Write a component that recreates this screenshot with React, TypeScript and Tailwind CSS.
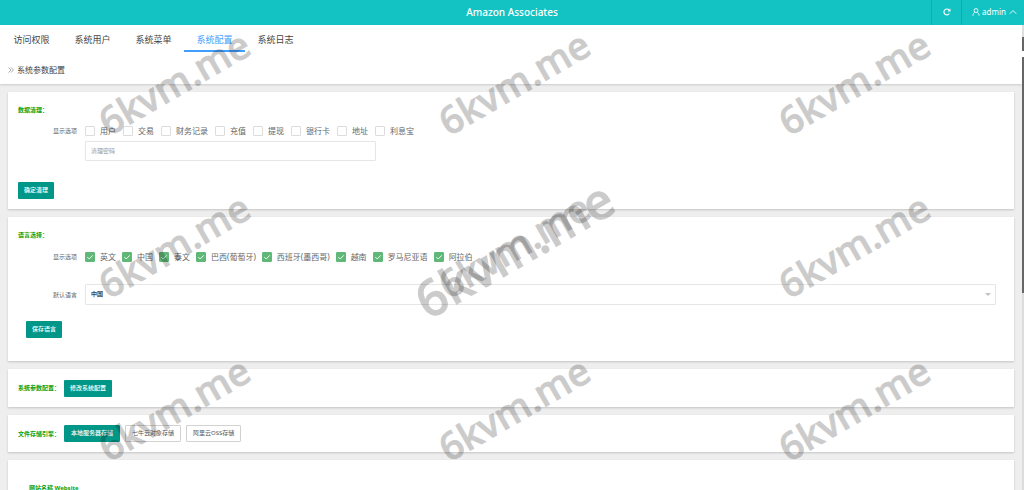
import { useState } from 'react';

const tabs = ['访问权限', '系统用户', '系统菜单', '系统配置', '系统日志'];
const cleanOptions = ['用户', '交易', '财务记录', '充值', '提现', '银行卡', '地址', '利息宝'];
const languages = ['英文', '中国', '泰文', '巴西(葡萄牙)', '西班牙(墨西哥)', '越南', '罗马尼亚语', '阿拉伯'];
const engines = ['本地服务器存储', '七牛云对象存储', '阿里云OSS存储'];

function CheckItem({ label, checked = false }: { label: string; checked?: boolean }) {
    return (
        <label className="flex items-center gap-[5px] text-[8px] leading-[10px] text-[#666] whitespace-nowrap">
            <span className="relative flex">
                <input
                    type="checkbox"
                    defaultChecked={checked}
                    className="peer appearance-none size-[10px] rounded-[1px] border border-[#dcdcdc] bg-white checked:border-[#5fb878] checked:bg-[#5fb878]"
                />
                <svg viewBox="0 0 10 10" className="absolute inset-0 size-[10px] hidden peer-checked:block pointer-events-none">
                    <path d="M2.3 5.1 4.2 7 7.8 3.3" fill="none" stroke="#fff" strokeWidth="0.9" />
                </svg>
            </span>
            {label}
        </label>
    );
}

function Card({ className, children }: { className: string; children?: React.ReactNode }) {
    return <section className={`bg-white px-[10px] shadow-[0_1px_2px_rgba(0,0,0,0.18)] ${className}`}>{children}</section>;
}

function Heading({ children }: { children: React.ReactNode }) {
    return <h2 className="text-[6px] leading-[10px] font-bold text-[#0a9f0a] whitespace-nowrap">{children}</h2>;
}

function PrimaryButton({ children }: { children: React.ReactNode }) {
    return (
        <button className="h-[17px] px-[6px] rounded-[1px] bg-[#009688] text-[6px] font-medium text-white whitespace-nowrap">
            {children}
        </button>
    );
}

function Watermark() {
    return (
        <div className="absolute inset-0 pointer-events-none select-none text-black font-medium" aria-hidden="true">
            <div className="grid grid-cols-3 grid-rows-3 size-full pl-1">
                {Array.from({ length: 9 }, (_, i) => (
                    <span key={i} className="flex items-center justify-center">
                        <span className="-rotate-30 text-[38px] leading-none opacity-20 [-webkit-text-stroke:1px_black]">6kvm.me</span>
                    </span>
                ))}
            </div>
            <div className="absolute inset-0 flex items-center justify-center pl-1 pt-2">
                <span className="-rotate-30 text-[50px] leading-none opacity-20 [-webkit-text-stroke:1px_black]">6kvm.me</span>
            </div>
        </div>
    );
}

export default function App() {
    const [activeTab, setActiveTab] = useState('系统配置');
    const [engine, setEngine] = useState('本地服务器存储');

    return (
        <div className="relative h-screen overflow-hidden flex flex-col bg-[#eee] font-['Noto_Sans','Noto_Sans_CJK_SC',sans-serif] text-[#444]">
            <header className="grid grid-cols-[1fr_auto_1fr] h-[25px] shrink-0 bg-[#13c2c2] text-white">
                <span />
                <h1 className="text-[10px] leading-[24px] font-medium">Amazon Associates</h1>
                <div className="flex justify-end">
                    <button aria-label="刷新" className="w-[30px] pb-[2px] flex items-center justify-center border-l border-[#10adad]">
                        <svg viewBox="0 0 16 16" className="size-[8px]" fill="none" stroke="#fff" strokeWidth="2.2">
                            <path d="M12.8 11A5.9 5.9 0 1 1 12.4 4.2" />
                            <path d="M15 1v6H9z" fill="#fff" stroke="none" />
                        </svg>
                    </button>
                    <button className="w-[63px] pl-[10px] pb-[2px] flex items-center border-l border-[#10adad] text-[8px]">
                        <svg viewBox="0 0 16 16" className="size-[8px] mr-[2px]" fill="none" stroke="#fff" strokeWidth="1.8">
                            <circle cx="8" cy="5" r="3.9" />
                            <path d="M1.8 15.5C2 11.5 4 9.2 6 8.7M14.2 15.5C14 11.5 12 9.2 10 8.7" />
                        </svg>
                        admin
                        <svg viewBox="0 0 16 16" className="size-[8px] ml-[3px]" fill="none" stroke="#fff" strokeWidth="1.8">
                            <path d="M1.5 11.5 8 5l6.5 6.5" />
                        </svg>
                    </button>
                </div>
            </header>

            <div className="flex flex-1 min-h-0">
                <div className="flex-1 min-w-0 overflow-hidden">
                    <div className="h-[59px] bg-white shadow-[0_1px_2px_rgba(0,0,0,0.15)]">
                        <nav className="flex pl-px">
                            {tabs.map((tab) => (
                                <button
                                    key={tab}
                                    onClick={() => setActiveTab(tab)}
                                    className={`w-[61px] h-[27px] pb-px pt-[5px] text-[9px] leading-[20px] border-b-2 ${
                                        tab === activeTab ? 'border-[#409eff] text-[#409eff]' : 'border-transparent'
                                    }`}
                                >
                                    {tab}
                                </button>
                            ))}
                        </nav>
                        <div className="flex items-center gap-[3px] pl-2 pt-3 text-[8px] leading-[12px]">
                            <svg viewBox="0 0 12 12" className="size-[6px]" fill="none" stroke="#888" strokeWidth="1.4">
                                <path d="M1 1l5 5-5 5M6 1l5 5-5 5" />
                            </svg>
                            系统参数配置
                        </div>
                    </div>

                    <main className="flex flex-col gap-2 p-2">
                        <Card className="h-[117px] pt-[13px]">
                            <Heading>数据清理：</Heading>
                            <div className="flex items-center gap-2 mt-[11px]">
                                <span className="w-[59px] text-right text-[6px] leading-[10px] text-[#666]">显示选项</span>
                                <div className="flex gap-[7px]">
                                    {cleanOptions.map((item) => <CheckItem key={item} label={item} />)}
                                </div>
                            </div>
                            <input
                                type="password"
                                aria-label="清理密码"
                                placeholder="清理密码"
                                className="block w-[291px] h-[20px] ml-[67px] mt-[5px] px-[5px] border border-[#e6e6e6] rounded-[1px] text-[6px] placeholder:text-[#999]"
                            />
                            <div className="flex mt-[21px]">
                                <PrimaryButton>确定清理</PrimaryButton>
                            </div>
                        </Card>

                        <Card className="h-[144px] pt-[13px]">
                            <Heading>语言选择：</Heading>
                            <div className="flex items-center gap-2 mt-[12px]">
                                <span className="w-[59px] text-right text-[6px] leading-[10px] text-[#666]">显示选项</span>
                                <div className="flex gap-[6px]">
                                    {languages.map((item) => <CheckItem key={item} label={item} checked />)}
                                </div>
                            </div>
                            <div className="flex items-center gap-2 mt-[22px] mr-2">
                                <label htmlFor="lang" className="w-[59px] text-right text-[6px] leading-[10px] text-[#666]">默认语言</label>
                                <div className="relative flex-1">
                                    <select id="lang" defaultValue="中国" className="block appearance-none w-full h-[21px] px-[5px] border border-[#e6e6e6] rounded-[1px] bg-white text-[6px] font-medium text-black">
                                        {languages.map((item) => <option key={item}>{item}</option>)}
                                    </select>
                                    <svg viewBox="0 0 6 3" className="absolute right-[5px] top-[9px] w-[6px] h-[3px] pointer-events-none">
                                        <path d="M0 0h6L3 3z" fill="#c2c2c2" />
                                    </svg>
                                </div>
                            </div>
                            <div className="flex mt-4 pl-2">
                                <PrimaryButton>保存语言</PrimaryButton>
                            </div>
                        </Card>

                        <Card className="h-[38px] flex items-center gap-[4px]">
                            <Heading>系统参数配置：</Heading>
                            <PrimaryButton>修改系统配置</PrimaryButton>
                        </Card>

                        <Card className="h-[37px] flex items-center gap-[4px]">
                            <Heading>文件存储引擎：</Heading>
                            <div className="flex gap-[5px]">
                                {engines.map((item) => (
                                    <button
                                        key={item}
                                        onClick={() => setEngine(item)}
                                        className={`h-[17px] px-[6px] rounded-[1px] border text-[6px] whitespace-nowrap ${
                                            item === engine ? 'border-[#009688] bg-[#009688] text-white font-medium' : 'border-[#d2d2d2] bg-white text-[#555]'
                                        }`}
                                    >
                                        {item}
                                    </button>
                                ))}
                            </div>
                        </Card>

                        <Card className="h-[60px] pt-[23px]">
                            <div className="pl-[11px]">
                                <Heading>网站名称 Website</Heading>
                            </div>
                        </Card>
                    </main>
                </div>

                {/* scroll track */}
                <div className="w-[2px] flex flex-col bg-[#ddd]">
                    <div className="h-[14px] mt-[12px] bg-[#666]" />
                    <div className="h-[6px] bg-white" />
                    <div className="h-[236px] bg-[#666]" />
                </div>
            </div>

            <Watermark />
        </div>
    );
}
